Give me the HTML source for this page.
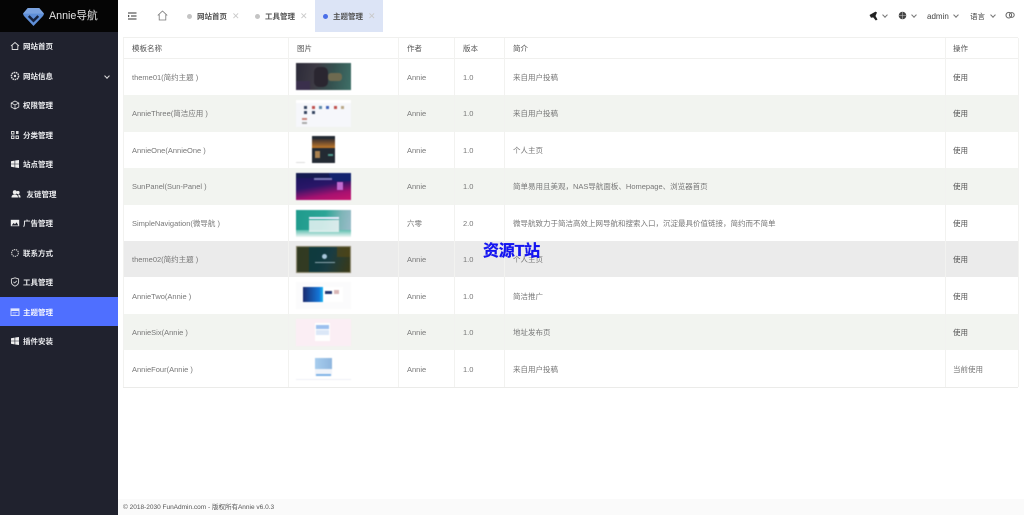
<!DOCTYPE html>
<html lang="zh"><head><meta charset="utf-8"><title>主题管理</title>
<style>
*{margin:0;padding:0;box-sizing:border-box}
html,body{width:1024px;height:515px;overflow:hidden;background:#fff;font-family:"Liberation Sans","Noto Sans CJK SC",sans-serif}
.a{position:absolute}
#wrap{position:relative;width:1024px;height:515px;overflow:hidden;filter:blur(.3px)}
#side{left:0;top:0;width:118px;height:515px;background:#20222e}
#logo{left:0;top:0;width:118px;height:32px;background:#050505}
.mi{position:absolute;left:0;width:118px;height:29px;line-height:29px;color:#e8e9ec;font-size:7.5px;font-weight:700;padding-left:23px;white-space:nowrap}
.mi svg{position:absolute;left:10px;top:9px;width:10px;height:10px}
.t{position:absolute;font-size:7.5px;line-height:12px;color:#777;white-space:nowrap}
.h{color:#555;font-weight:400}
.row{position:absolute;left:124px;width:894px}
.vl{position:absolute;top:38px;height:349px;width:1px;background:#f2f2f0}
.hl{position:absolute;left:123px;width:895px;height:1px;background:#f0f0ee}
.th{position:absolute;left:296px;width:55px;height:27px;overflow:hidden;filter:blur(.5px)}
.th div{position:absolute}
.tab{position:absolute;top:0;height:32px;line-height:33px;font-size:7.5px;font-weight:700;color:#555;white-space:nowrap}
.dot{position:absolute;top:14px;width:5px;height:5px;border-radius:50%;background:#c4c4c4}
.x{position:absolute;top:0;font-size:9px;font-weight:400;color:#c9c9c9}
.top{position:absolute;top:10.5px;font-size:7.5px;line-height:12px;color:#444;white-space:nowrap}
.car{position:absolute;top:13px;width:4px;height:4px;border-right:1px solid #777;border-bottom:1px solid #777;transform:rotate(45deg)}
</style></head><body>
<div id="wrap">
<div class="a" id="side"></div>
<div class="a" id="logo"></div>
<svg class="a" style="left:22.5px;top:7px" width="21" height="20" viewBox="0 0 22 21"><path d="M5 1H17L22 7Q22 8.5 20.500 10L11 20L1.500 10Q0 8.500 0 7Z" fill="#5f8fd8"/><path d="M5 1H17L22 7H0Z" fill="#7ba3e0"/><path d="M6 9.500L11 14.500L16 9.500" fill="none" stroke="#16233f" stroke-width="2.600"/></svg>
<div class="a" style="left:49px;top:8px;font-size:10.7px;line-height:16px;color:#e6e6e6;white-space:nowrap">Annie导航</div>

<div class="mi" style="top:32px"><svg viewBox="0 0 10 10"><path d="M1 5L5 1.5L9 5M2.2 4.5V8.5H7.8V4.5" fill="none" stroke="#ddd" stroke-width=".9"/></svg>网站首页</div>
<div class="mi" style="top:62px"><svg viewBox="0 0 10 10"><circle cx="5" cy="5" r="3.6" fill="none" stroke="#ddd" stroke-width="1.4" stroke-dasharray="1.6 .6"/><circle cx="5" cy="5" r="1.2" fill="#ddd"/></svg>网站信息</div>
<div class="a" style="left:105px;top:74px;width:4px;height:4px;border-right:1px solid #ddd;border-bottom:1px solid #ddd;transform:rotate(45deg)"></div>
<div class="mi" style="top:91px"><svg viewBox="0 0 10 10"><path d="M5 1L8.8 3V7L5 9L1.2 7V3ZM1.2 3L5 5L8.8 3M5 5V9" fill="none" stroke="#ddd" stroke-width=".8"/></svg>权限管理</div>
<div class="mi" style="top:121px"><svg viewBox="0 0 10 10"><path d="M1.5 1.5H4V4H1.5ZM1.5 6H4V8.5H1.5ZM6 6H8.5V8.5H6Z" fill="none" stroke="#ddd" stroke-width=".9"/><path d="M6 1H8.5V4H6Z" fill="#ddd"/></svg>分类管理</div>
<div class="mi" style="top:150px"><svg viewBox="0 0 10 10"><path d="M1 2.2L4.6 1.6V4.7H1ZM5.2 1.5L9 1V4.7H5.2ZM1 5.3H4.6V8.4L1 7.8ZM5.2 5.3H9V9L5.2 8.5Z" fill="#eee"/></svg>站点管理</div>
<div class="mi" style="top:180px;padding-left:26.5px"><svg style="left:11px;width:10px" viewBox="0 0 10 10"><circle cx="3.8" cy="3.2" r="2" fill="#eee"/><circle cx="7" cy="3.5" r="1.6" fill="#eee"/><path d="M.5 8.5C.5 6 2 5.5 3.8 5.5S7 6 7 8.5ZM7.6 8.5C7.6 7 7.4 6 6.8 5.5C8.5 5.3 9.6 6.3 9.6 8.5Z" fill="#eee"/></svg>友链管理</div>
<div class="mi" style="top:209px"><svg viewBox="0 0 10 10"><path d="M.8 1.8H9.2V8.2H.8Z" fill="#eee"/><path d="M1.6 7.5L3.6 5L5 6.2L6.6 4.4L8.4 7.5Z" fill="#20222e"/></svg>广告管理</div>
<div class="mi" style="top:239px"><svg viewBox="0 0 10 10"><circle cx="5" cy="5" r="3.4" fill="none" stroke="#ccc" stroke-width="1.1" stroke-dasharray="1.4 .7"/></svg>联系方式</div>
<div class="mi" style="top:268px"><svg viewBox="0 0 10 10"><path d="M5 .8L8.6 2V5C8.6 7 7 8.4 5 9.2C3 8.4 1.4 7 1.4 5V2Z" fill="none" stroke="#ddd" stroke-width=".9"/><path d="M3.4 4.8L4.7 6L6.8 3.8" fill="none" stroke="#ddd" stroke-width=".8"/></svg>工具管理</div>
<div class="a" style="left:0;top:297px;width:118px;height:29px;background:#4f6fff"></div>
<div class="mi" style="top:298px;color:#f4f6ff"><svg viewBox="0 0 10 10"><path d="M1 1.8H9V8.4H1Z" fill="none" stroke="#dfe5ff" stroke-width=".9"/><path d="M1 1.8H9V4H1Z" fill="#dfe5ff"/><path d="M2.5 5.5H7.5M2.5 7H6" stroke="#dfe5ff" stroke-width=".6"/></svg>主题管理</div>
<div class="mi" style="top:327px"><svg viewBox="0 0 10 10"><path d="M1 2.2L4.6 1.6V4.7H1ZM5.2 1.5L9 1V4.7H5.2ZM1 5.3H4.6V8.4L1 7.8ZM5.2 5.3H9V9L5.2 8.5Z" fill="#eee"/></svg>插件安装</div>

<!-- top bar -->
<svg class="a" style="left:128px;top:12px" width="9" height="8" viewBox="0 0 9 8"><path d="M0 1H8.5M3 4H8.5M0 7H8.5" stroke="#333" stroke-width="1"/><path d="M0 2.8L1.8 4L0 5.2Z" fill="#333"/></svg>
<svg class="a" style="left:157px;top:10px" width="11" height="11" viewBox="0 0 11 11"><path d="M.8 5.4L5.5 1L10.2 5.4M2.2 4.6V10H8.8V4.6" fill="none" stroke="#777" stroke-width=".8"/></svg>
<div class="a" style="left:315px;top:0;width:68px;height:32px;background:#dce4f6"></div>
<div class="dot" style="left:187px"></div><div class="tab" style="left:197px">网站首页</div><div class="tab x" style="left:232px">✕</div>
<div class="dot" style="left:255px"></div><div class="tab" style="left:265px">工具管理</div><div class="tab x" style="left:300px">✕</div>
<div class="dot" style="left:323px;background:#4a6ee8"></div><div class="tab" style="left:333px">主题管理</div><div class="tab x" style="left:368px">✕</div>

<svg class="a" style="left:869px;top:11px" width="10" height="10" viewBox="0 0 10 10"><path d="M.5 4L6.5.6L8 1.5L6.5 5L8.5 8.5L6.8 9.5L4.2 6.4L2 6.8Z" fill="#222"/></svg><div class="car" style="left:883px"></div>
<svg class="a" style="left:898px;top:11px" width="9" height="9" viewBox="0 0 9 9"><circle cx="4.5" cy="4.5" r="3.8" fill="#444"/><path d="M.7 4.5H8.3M4.5.7V8.3" stroke="#ccc" stroke-width=".5"/></svg><div class="car" style="left:912px"></div>
<div class="top" style="left:927px;font-size:8px">admin</div><div class="car" style="left:954px"></div>
<div class="top" style="left:970px">语言</div><div class="car" style="left:991px"></div>
<svg class="a" style="left:1005px;top:11px" width="10" height="9" viewBox="0 0 10 9"><circle cx="3.8" cy="4.2" r="2.8" fill="none" stroke="#666" stroke-width="1"/><circle cx="6.8" cy="4" r="2.4" fill="none" stroke="#666" stroke-width="1"/></svg>

<!-- table -->
<div class="row" style="top:95px;height:37px;background:#f2f4f0"></div>
<div class="row" style="top:168px;height:37px;background:#f2f4f0"></div>
<div class="row" style="top:241px;height:36px;background:#ebebeb"></div>
<div class="row" style="top:314px;height:36px;background:#f2f4f0"></div>
<div class="hl" style="top:37px"></div><div class="hl" style="top:58px"></div><div class="hl" style="top:387px;background:#ebebe9"></div>
<div class="vl" style="left:123px"></div><div class="vl" style="left:288px"></div><div class="vl" style="left:398px"></div><div class="vl" style="left:454px"></div><div class="vl" style="left:504px"></div><div class="vl" style="left:945px"></div><div class="vl" style="left:1018px"></div>

<div class="t h" style="left:132px;top:43px">模板名称</div><div class="t h" style="left:297px;top:43px">图片</div><div class="t h" style="left:407px;top:43px">作者</div><div class="t h" style="left:463px;top:43px">版本</div><div class="t h" style="left:513px;top:43px">简介</div><div class="t h" style="left:953px;top:43px">操作</div>

<div class="t" style="left:132px;top:72px">theme01(简约主题 )</div><div class="t" style="left:407px;top:72px">Annie</div><div class="t" style="left:463px;top:72px">1.0</div><div class="t" style="left:513px;top:72px">来自用户投稿</div><div class="t h" style="left:953px;top:72px">使用</div>
<div class="t" style="left:132px;top:108px">AnnieThree(简洁应用 )</div><div class="t" style="left:407px;top:108px">Annie</div><div class="t" style="left:463px;top:108px">1.0</div><div class="t" style="left:513px;top:108px">来自用户投稿</div><div class="t h" style="left:953px;top:108px">使用</div>
<div class="t" style="left:132px;top:145px">AnnieOne(AnnieOne )</div><div class="t" style="left:407px;top:145px">Annie</div><div class="t" style="left:463px;top:145px">1.0</div><div class="t" style="left:513px;top:145px">个人主页</div><div class="t h" style="left:953px;top:145px">使用</div>
<div class="t" style="left:132px;top:181px">SunPanel(Sun-Panel )</div><div class="t" style="left:407px;top:181px">Annie</div><div class="t" style="left:463px;top:181px">1.0</div><div class="t" style="left:513px;top:181px">简单易用且美观，NAS导航面板、Homepage、浏览器首页</div><div class="t h" style="left:953px;top:181px">使用</div>
<div class="t" style="left:132px;top:218px">SimpleNavigation(微导航 )</div><div class="t" style="left:407px;top:218px">六零</div><div class="t" style="left:463px;top:218px">2.0</div><div class="t" style="left:513px;top:218px">微导航致力于简洁高效上网导航和搜索入口，沉淀最具价值链接，简约而不简单</div><div class="t h" style="left:953px;top:218px">使用</div>
<div class="t" style="left:132px;top:254px">theme02(简约主题 )</div><div class="t" style="left:407px;top:254px">Annie</div><div class="t" style="left:463px;top:254px">1.0</div><div class="t" style="left:513px;top:254px">个人主页</div><div class="t h" style="left:953px;top:254px">使用</div>
<div class="t" style="left:132px;top:291px">AnnieTwo(Annie )</div><div class="t" style="left:407px;top:291px">Annie</div><div class="t" style="left:463px;top:291px">1.0</div><div class="t" style="left:513px;top:291px">简洁推广</div><div class="t h" style="left:953px;top:291px">使用</div>
<div class="t" style="left:132px;top:327px">AnnieSix(Annie )</div><div class="t" style="left:407px;top:327px">Annie</div><div class="t" style="left:463px;top:327px">1.0</div><div class="t" style="left:513px;top:327px">地址发布页</div><div class="t h" style="left:953px;top:327px">使用</div>
<div class="t" style="left:132px;top:364px">AnnieFour(Annie )</div><div class="t" style="left:407px;top:364px">Annie</div><div class="t" style="left:463px;top:364px">1.0</div><div class="t" style="left:513px;top:364px">来自用户投稿</div><div class="t" style="left:953px;top:364px">当前使用</div>

<!-- thumbnails -->
<div class="th" style="top:63px;background:linear-gradient(100deg,#2b2a38 0%,#3d3a44 35%,#34514f 65%,#3f7068 100%)"><div style="left:18px;top:4px;width:14px;height:20px;background:#2a2630;border-radius:5px"></div><div style="left:32px;top:10px;width:14px;height:8px;background:#6e6a50;border-radius:3px"></div><div style="left:0;top:18px;width:14px;height:9px;background:#3a2f4c"></div></div>
<div class="th" style="top:100px;background:#f6f7fb"><div style="left:0;top:0;width:55px;height:3px;background:#fff"></div><div style="left:8px;top:6px;width:3px;height:3px;background:#35445f"></div><div style="left:16px;top:6px;width:3px;height:3px;background:#c0504d"></div><div style="left:23px;top:6px;width:3px;height:3px;background:#5b8aa8"></div><div style="left:30px;top:6px;width:3px;height:3px;background:#3f63b8"></div><div style="left:38px;top:6px;width:3px;height:3px;background:#c0504d"></div><div style="left:45px;top:6px;width:3px;height:3px;background:#b9a888"></div><div style="left:8px;top:11px;width:3px;height:3px;background:#35445f"></div><div style="left:16px;top:11px;width:3px;height:3px;background:#35445f"></div><div style="left:6px;top:18px;width:5px;height:2px;background:#c9857a"></div><div style="left:6px;top:22px;width:5px;height:2px;background:#aaa"></div></div>
<div class="th" style="top:136px;background:transparent"><div style="left:16px;top:0;width:23px;height:27px;background:#232a33"></div><div style="left:16px;top:3px;width:23px;height:9px;background:linear-gradient(#3a3030,#c47a2a)"></div><div style="left:19px;top:15px;width:5px;height:7px;background:#a9814f"></div><div style="left:32px;top:18px;width:5px;height:2px;background:#4f9a8c"></div><div style="left:0;top:26px;width:9px;height:1px;background:#ddd"></div></div>
<div class="th" style="top:173px;background:linear-gradient(170deg,#15145a 0%,#2a1668 45%,#a61170 75%,#c7166f 100%)"><div style="left:0;top:0;width:55px;height:5px;background:#141a50"></div><div style="left:33px;top:0;width:22px;height:8px;background:#12236e;border-radius:0 0 0 8px"></div><div style="left:41px;top:9px;width:6px;height:8px;background:#c06ad0"></div><div style="left:18px;top:5px;width:18px;height:2px;background:#7b78b8"></div></div>
<div class="th" style="top:210px;background:linear-gradient(100deg,#1f9a8c 0%,#2ba596 50%,#7fb5b8 78%,#9dbdcb 100%)"><div style="left:0;top:20px;width:55px;height:7px;background:linear-gradient(#5fbfb0,#eef6f4)"></div><div style="left:13px;top:7px;width:30px;height:2px;background:#eef"></div><div style="left:13px;top:10px;width:30px;height:12px;background:rgba(235,245,245,.85)"></div></div>
<div class="th" style="top:246px;background:linear-gradient(110deg,#0e3a3a 0%,#103a40 45%,#1a3c42 60%,#3b3a16 100%);border:1px solid #8f8a72"><div style="left:0;top:0;width:12px;height:26px;background:#4a3a10;opacity:.6"></div><div style="left:25px;top:7px;width:5px;height:5px;border-radius:50%;background:#a9c7dc"></div><div style="left:18px;top:15px;width:20px;height:1px;background:#8aa5ad"></div><div style="left:40px;top:0;width:15px;height:10px;background:#5a4a12;opacity:.6"></div></div>
<div class="th" style="top:282px;background:#fbfbfc"><div style="left:7px;top:5px;width:20px;height:15px;background:linear-gradient(90deg,#1a2a6e,#1476d8 80%,#19b6f0)"></div><div style="left:27px;top:5px;width:20px;height:15px;background:#fff"></div><div style="left:29px;top:9px;width:7px;height:3px;background:#23336e"></div><div style="left:38px;top:8px;width:5px;height:4px;background:#d9b7b7"></div></div>
<div class="th" style="top:319px;background:#fbeef4"><div style="left:19px;top:4px;width:15px;height:18px;background:#fff"></div><div style="left:20px;top:6px;width:13px;height:4px;background:#9cc0ee"></div><div style="left:20px;top:11px;width:13px;height:5px;background:#dbe7f7"></div></div>
<div class="th" style="top:355px;background:#fff"><div style="left:19px;top:3px;width:17px;height:11px;background:linear-gradient(90deg,#a7cdee,#8fb6de)"></div><div style="left:19px;top:14px;width:17px;height:7px;background:#f0f4fa"></div><div style="left:20px;top:19px;width:15px;height:2px;background:#7eb2e6"></div><div style="left:0;top:24px;width:55px;height:1px;background:#eef0f6"></div></div>

<div class="a" style="left:483px;top:244px;font-size:16px;line-height:16px;font-weight:700;color:#1414f0;white-space:nowrap;letter-spacing:-.2px;-webkit-text-stroke:.3px #1414f0">资源T站</div>

<div class="a" style="left:118px;top:499px;width:906px;height:16px;background:#fafafa"></div>
<div class="t" style="left:123px;top:502px;font-size:6.5px;color:#555">© 2018-2030 FunAdmin.com - 版权所有Annie v6.0.3</div>
</div>
</body></html>
